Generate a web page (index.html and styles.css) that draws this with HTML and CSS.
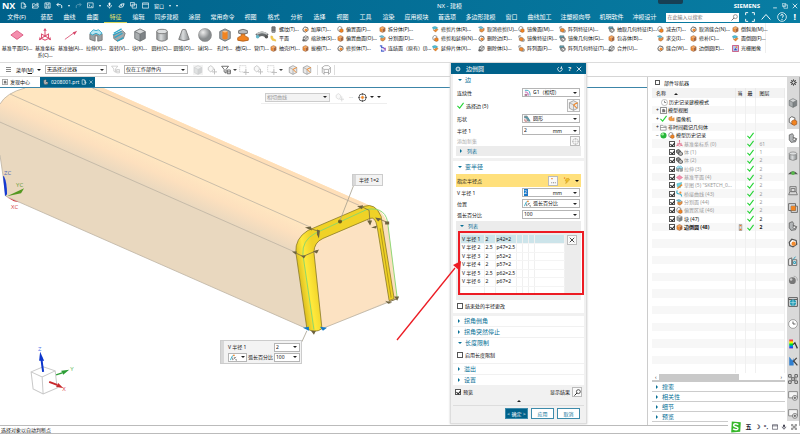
FILE: index.html
```html
<!DOCTYPE html>
<html lang="zh-CN">
<head>
<meta charset="utf-8">
<title>NX - 建模</title>
<link rel="stylesheet" href="styles.css">
</head>
<body>
<svg class="defs" aria-hidden="true">
  <symbol id="cube" viewBox="0 0 16 16"><path fill="#d4d6d7" d="M8 1l6 3-6 3-6-3z"/><path fill="#a9adaf" d="M2 4l6 3v8l-6-3z"/><path fill="#7e8386" d="M14 4L8 7v8l6-3z"/><path fill="none" stroke="#6c7072" d="M8 1l6 3v8l-6 3-6-3V4zM2 4l6 3 6-3M8 7v8"/></symbol>
  <symbol id="ocube" viewBox="0 0 16 16"><path fill="#f6a55a" d="M8 1l6 3-6 3-6-3z"/><path fill="#f28a2e" d="M2 4l6 3v8l-6-3z"/><path fill="#a8643a" d="M14 4L8 7v8l6-3z"/><path fill="none" stroke="#93684a" d="M8 1l6 3v8l-6 3-6-3V4z"/></symbol>
  <symbol id="mixed" viewBox="0 0 16 16"><path fill="#fff" stroke="#666" stroke-width="1.5" d="M2 4l4-3 5 2v7l-4 3-5-3z"/><path fill="#f28420" stroke="#96552a" d="M10 6l4 2v5l-4 2-4-2V8z"/></symbol>
  <symbol id="mixteal" viewBox="0 0 16 16"><path fill="#6dc3d8" stroke="#3a7f92" d="M1 3l6-2 5 3-5 3z"/><path fill="#f0953f" stroke="#8e5a33" d="M4 7l5 1 5-3v5l-5 4-5-2z"/></symbol>
  <symbol id="sheet" viewBox="0 0 16 16"><path fill="#51c0d8" stroke="#3591a6" d="M1 3q6-4 12 1l-4 4Q5 4 3 8z"/><path fill="#f18d30" stroke="#b06a2b" d="M3 9l5 5 6-6-3-2-4 3z"/></symbol>
  <symbol id="ring" viewBox="0 0 16 16"><path fill="#fff" stroke="#555" stroke-width="2" d="M2 7l4-5 7 2 1 6-6 4-5-2z"/><circle cx="9" cy="9" r="3.500" fill="#f28a2e"/></symbol>
  <symbol id="ghost" viewBox="0 0 16 16"><path fill="#eee" stroke="#555" stroke-width="1.500" d="M3 5l5-3 6 2v6l-5 4-6-2zM3 5l6 2 5-3M9 7v7"/><circle cx="4" cy="12" r="3" fill="#666"/></symbol>
  <symbol id="pattern" viewBox="0 0 16 16"><path fill="none" stroke="#555" stroke-width="1.500" d="M2 6V2h5M9 14h5V9"/><path fill="#f28a2e" stroke="#6b5443" d="M3 7l4-2 5 2v5l-4 2-5-2z"/></symbol>
  <symbol id="geo" viewBox="0 0 16 16"><path fill="#67b9cb" stroke="#46606a" stroke-width="1.500" d="M2 2h9v5H2z"/><path fill="#aaa" stroke="#555" stroke-width="1.500" d="M4 7l5-2 5 2v5l-5 3-5-3z"/><path stroke="#fff" stroke-width="2" d="M8 8l4 4"/></symbol>
  <symbol id="thread" viewBox="0 0 16 16"><rect x="4" y="1" width="8" height="14" rx="2" fill="#999" stroke="#555"/><path stroke="#333" d="M4 4h8M4 7h8M4 10h8"/></symbol>
  <symbol id="state" viewBox="0 0 16 16"><path fill="#ddd" stroke="#666" d="M5 1h6v14H5z"/><path fill="#e87a2a" d="M6 2h4v3H6zM6 11h4v3H6z"/></symbol>
  <symbol id="steps" viewBox="0 0 16 16"><path fill="#f6d04d" stroke="#e0a92e" d="M2 2l4 1 1 5 6 3v3l-8-2-3-5z"/></symbol>
  <symbol id="links" viewBox="0 0 16 16"><path fill="none" stroke="#5269d0" stroke-width="3" d="M2 2h4v4h5M6 10v4h6"/><path fill="none" stroke="#9956bd" stroke-width="3" d="M10 8h4v5"/></symbol>
  <symbol id="axes" viewBox="0 0 16 16"><path fill="none" stroke="#dc5274" stroke-width="1.200" d="M8 1v8l-6 4M8 9l6 4M8 9l-4-2v5l4 2 4-2V7z"/><path fill="#dc5274" d="M8 0l2 3H6zM1 14l1-4 2 3zM15 14l-1-4-2 3z"/></symbol>
  <symbol id="plane" viewBox="0 0 16 16"><path fill="#f48fae" stroke="#d9587f" d="M1 8l7-5 7 5-7 5z"/></symbol>
  <symbol id="axis" viewBox="0 0 16 16"><path stroke="#d95375" d="M1 13L12 5"/><path fill="#d64669" d="M15 3l-3 5-2-3z"/></symbol>
  <symbol id="extrude" viewBox="0 0 16 16"><path fill="#9a9fa1" stroke="#777" d="M1 7l4-3 3 2 3-2 4 3v7l-5 1V9H7v6l-6-2z"/><path fill="#b9e6f2" stroke="#2ca6c9" d="M1 6l4-4 3 1 3-1 4 4-3 2-4-2-4 2z"/></symbol>
  <symbol id="revolve" viewBox="0 0 16 16"><path fill="#a3a8aa" stroke="#777" d="M2 8l10-5 3 3-2 6-7 3-4-3z"/><path fill="none" stroke="#2ca6c9" stroke-width="1.500" d="M2 6l9-5M1 8l10-4M3 11l9-5M6 15l7-4"/></symbol>
  <linearGradient id="metal"><stop offset="0" stop-color="#8c9092"/><stop offset=".4" stop-color="#dadcdd"/><stop offset="1" stop-color="#85898b"/></linearGradient>
  <symbol id="cyl" viewBox="0 0 16 16"><path fill="url(#metal)" stroke="#777" d="M2 4v9q6 4 12 0V4z"/><ellipse cx="8" cy="4" rx="6" ry="2.500" fill="#dcdedf" stroke="#777"/></symbol>
  <symbol id="cone" viewBox="0 0 16 16"><path fill="url(#metal)" stroke="#777" d="M6 2L2 13q6 3 12 0L10 2Q8 1 6 2z"/></symbol>
  <radialGradient id="shine" cx=".35" cy=".3"><stop offset="0" stop-color="#eee"/><stop offset="1" stop-color="#888c8e"/></radialGradient>
  <symbol id="ball" viewBox="0 0 16 16"><circle cx="8" cy="8" r="7.500" fill="url(#shine)" stroke="#777" stroke-width=".5"/></symbol>
  <symbol id="hole" viewBox="0 0 16 16"><path fill="#9fa3a5" stroke="#6c7072" d="M8 1l6 3v8l-6 3-6-3V4z"/><path fill="#f28420" d="M5 4q3-2 6 0v8q-3 2-6 0z"/><path fill="#fbc48c" d="M5 4q3-2 6 0-3 2-6 0z"/></symbol>
  <symbol id="groove" viewBox="0 0 16 16"><path fill="#b9bcbe" stroke="#666" d="M3 3q5-3 10 0v3q-5 2-10 0z"/><path fill="#f28420" stroke="#b5621b" d="M6 7h4v2l4 2v3q-6 2-12 0v-3l4-2z"/></symbol>
  <symbol id="tube" viewBox="0 0 16 16"><path fill="none" stroke="#696d6f" stroke-width="5" d="M2 9q6-5 12 0"/><path fill="none" stroke="#bfc2c3" stroke-width="2" d="M2 7q6-4 12 0"/><circle cx="3" cy="10" r="2" fill="#65b7cb"/><circle cx="13" cy="10" r="2" fill="#555"/></symbol>
  <symbol id="filter" viewBox="0 0 16 16"><path fill="#fff" stroke="currentColor" stroke-width="1.200" d="M1 2h11L8 7v6l-3-2V7z"/><path fill="none" stroke="currentColor" stroke-width="1.200" d="M10 8h5v6h-5zM10 11h5"/></symbol>
  <symbol id="snap" viewBox="0 0 16 16"><path fill="#eee" stroke="currentColor" stroke-width="1.200" d="M2 4l4-3 4 3v4L6 11 2 8z"/><path stroke="currentColor" stroke-width="1.500" d="M12 6v9M8 11h8"/></symbol>
  <symbol id="dashbox" viewBox="0 0 16 16"><path fill="none" stroke="currentColor" stroke-dasharray="2 1" d="M1 1h10v10H1z"/><path stroke="currentColor" stroke-width="1.500" d="M11 7v9M7 12h9"/></symbol>
  <symbol id="wire" viewBox="0 0 16 16"><path fill="none" stroke="#888" d="M2 4l4-3h6l3 3-2 3H4zM2 4v8l3 3V8M15 4v8l-3 3V8M5 12h7"/></symbol>
  <symbol id="half" viewBox="0 0 16 16"><path fill="#e8e8e8" stroke="#888" d="M8 1l6 3v8l-6 3-6-3V4z"/><path fill="none" stroke="#999" d="M2 4l6 3v8"/><path stroke="#f28420" stroke-width="1.500" d="M8 7l6-3M8 7l5 5"/></symbol>
  <symbol id="gear" viewBox="0 0 16 16"><circle cx="8" cy="8" r="4" fill="none" stroke="currentColor" stroke-width="2"/><path stroke="currentColor" stroke-width="2" d="M8 1v2M8 13v2M1 8h2M13 8h2M3 3l2 2M11 11l2 2M13 3l-2 2M3 13l2-2"/></symbol>
  <symbol id="page" viewBox="0 0 16 16"><path fill="none" stroke="currentColor" stroke-width="1.500" d="M3 14V2h6l3 3v9zM9 2v4h3M8 10h7"/></symbol>
  <symbol id="open" viewBox="0 0 16 16"><path fill="none" stroke="currentColor" stroke-width="1.500" d="M1 14V4h5l1 2h6v3M1 14l3-5h11l-2 5zM10 3h4v4"/></symbol>
  <symbol id="save" viewBox="0 0 16 16"><path fill="none" stroke="currentColor" stroke-width="1.500" d="M2 2h12v12H2zM5 2v4h6V2M5 14V9h6v5"/></symbol>
  <symbol id="undo" viewBox="0 0 16 16"><path fill="none" stroke="currentColor" stroke-width="2" d="M6 2L2 6l4 4M2 6h8q5 1 3 8"/></symbol>
  <symbol id="screen" viewBox="0 0 16 16"><path fill="none" stroke="currentColor" stroke-width="1.500" d="M1 2h13v11H1zM4 6l3 2-3 2M9 10h3"/></symbol>
  <symbol id="mic" viewBox="0 0 16 16"><rect x="6" y="1" width="4" height="8" rx="2" fill="currentColor"/><path fill="none" stroke="currentColor" stroke-width="1.500" d="M3 7q0 5 5 5t5-5M8 12v3"/></symbol>
  <symbol id="touch" viewBox="0 0 16 16"><path fill="none" stroke="currentColor" stroke-width="2" d="M2 11l5-6 7-1-3 7-6 1zM7 5l1 4"/></symbol>
  <symbol id="windows" viewBox="0 0 16 16"><path fill="none" stroke="currentColor" stroke-width="1.500" d="M1 1h9v8H1zM5 5h10v9H5z"/></symbol>
  <symbol id="win" viewBox="0 0 16 16"><path fill="none" stroke="currentColor" stroke-width="1.500" d="M1 2h14v12H1zM1 5h14"/></symbol>
  <symbol id="search" viewBox="0 0 16 16"><circle cx="10" cy="6" r="4.500" fill="none" stroke="currentColor" stroke-width="1.500"/><path stroke="currentColor" stroke-width="2" d="M7 9l-6 6"/></symbol>
  <symbol id="full" viewBox="0 0 16 16"><path fill="none" stroke="currentColor" stroke-width="1.500" d="M1 5V1h4M11 1h4v4M15 11v4h-4M5 15H1v-4"/></symbol>
  <symbol id="up" viewBox="0 0 16 16"><path fill="none" stroke="currentColor" stroke-width="1.500" d="M1 12l7-8 7 8"/></symbol>
  <symbol id="help" viewBox="0 0 16 16"><circle cx="8" cy="8" r="7" fill="none" stroke="currentColor" stroke-width="1.200"/><path fill="none" stroke="currentColor" stroke-width="1.500" d="M6 6q0-2 2-2t2 2-2 3M8 11v2"/></symbol>
  <symbol id="x" viewBox="0 0 16 16"><path stroke="currentColor" stroke-width="2" d="M2 2l12 12M14 2L2 14"/></symbol>
  <symbol id="min" viewBox="0 0 16 16"><path stroke="currentColor" stroke-width="2" d="M3 13h10"/></symbol>
  <symbol id="reset" viewBox="0 0 16 16"><path fill="none" stroke="currentColor" stroke-width="2" d="M5 3a6 6 0 1 0 7 1M12 1v5h-4"/></symbol>
  <symbol id="tick" viewBox="0 0 16 16"><path fill="none" stroke="#25d435" stroke-width="2.500" d="M1 9l5 5L15 2"/></symbol>
  <symbol id="g1" viewBox="0 0 16 16"><path fill="none" stroke="#34a3be" stroke-width="2" d="M2 3h5q7 0 7 12"/><path fill="none" stroke="#c04dab" stroke-width="2" d="M2 7h3q5 0 5 8"/><path stroke="#666" d="M2 12h5v3H2z" fill="#e65a9b"/></symbol>
  <symbol id="shape" viewBox="0 0 16 16"><path fill="#999" stroke="#4a6c78" d="M1 2h6l7 12H8L5 7H1z"/><path fill="none" stroke="#319ab4" stroke-width="2" d="M3 5q8 0 10 9"/><path fill="none" stroke="#a33" stroke-width="1.500" d="M2 9v5h5"/></symbol>
  <symbol id="percent" viewBox="0 0 16 16"><path fill="none" stroke="#35a9c3" stroke-width="2" d="M1 14Q4 2 9 3"/><circle cx="9" cy="3" r="2" fill="#f28a2e"/><path fill="none" stroke="#555" stroke-width="1.500" d="M6 8v6M8 12l6-5M9 8h2M12 13h3v2"/></symbol>
  <symbol id="part" viewBox="0 0 16 16"><path fill="#b2b5b7" stroke="#444" d="M2 3l5-2 2 3-1 3 6 2-2 5-7 1-3-4z"/><circle cx="10" cy="10" r="2" fill="#fff" stroke="#444"/></symbol>
  <symbol id="clock" viewBox="0 0 16 16"><circle cx="8" cy="8" r="7" fill="#fff" stroke="#777"/><path fill="none" stroke="#555" stroke-width="1.500" d="M8 4v4h4"/></symbol>
  <symbol id="view" viewBox="0 0 16 16"><path fill="#fff" stroke="#555" stroke-width="1.500" d="M1 1h14v14H1z"/><path fill="#777" d="M5 5l4-1 3 3v5H5z"/></symbol>
  <symbol id="camera" viewBox="0 0 16 16"><path fill="#f5a044" stroke="#c06a25" d="M2 6l7-3v6l5-3v7H5l-3-2z"/></symbol>
  <symbol id="folder" viewBox="0 0 16 16"><path fill="#fff" stroke="#777" stroke-width="1.500" d="M1 14V3h5l2 2h6v9zM1 8h13"/></symbol>
  <symbol id="green" viewBox="0 0 16 16"><circle cx="8" cy="8" r="7" fill="#26b53a"/><circle cx="6" cy="5" r="3" fill="#9cec98"/></symbol>
  <symbol id="body" viewBox="0 0 16 16"><path fill="#888" stroke="#333" stroke-width="1.500" d="M1 3l5-2 4 3v5l-5 2-4-3z"/><path fill="#bbb" stroke="#333" stroke-width="1.500" d="M6 8l4-2 5 3v4l-4 2-5-2z"/></symbol>
  <symbol id="sketch" viewBox="0 0 16 16"><path fill="#73d1df" stroke="#30a4b8" d="M2 4l11-3-3 12-7-2z"/><path stroke="#e98932" stroke-width="3" d="M3 15l11-9"/></symbol>
  <symbol id="infer" viewBox="0 0 16 16"><path fill="#ef8422" d="M2 1h3v3H2z"/><path fill="#f5c52c" stroke="#c28b1c" d="M7 4l6-1 2 4-4 1 1 2-6 5 2-6H5z"/></symbol>
  <symbol id="points" viewBox="0 0 16 16"><path fill="#ef8422" d="M3 2h3v3H3z"/><path fill="#777" d="M3 12h2v2H3zM7 12h2v2H7zM11 12h2v2h-2z"/></symbol>
  <symbol id="curve" viewBox="0 0 16 16"><path fill="none" stroke="#38aec7" stroke-width="2.500" d="M3 1q-4 8 6 8 4 1 4 6"/><circle cx="10" cy="6" r="2.500" fill="#ef8f3a"/></symbol>
  <symbol id="globe" viewBox="0 0 16 16"><path fill="#ddd" stroke="#555" stroke-width="1.500" d="M1 1h14v14H1zM1 4h14"/><circle cx="8" cy="9" r="5" fill="#239ab4"/><path stroke="#c3edf1" d="M3 9h10M8 4v10" fill="none"/></symbol>
  <symbol id="hd" viewBox="0 0 16 16"><path fill="none" stroke="#777" stroke-width="1.500" d="M3 9V1h10v8M3 9l-2 5h14l-2-5zM5 4h6v5H5z"/></symbol>
  <symbol id="eye" viewBox="0 0 16 16"><path fill="#555" d="M0 10q8-10 16 0H0z"/><circle cx="8" cy="8" r="3" fill="#56b94a"/></symbol>
  <symbol id="layer" viewBox="0 0 16 16"><path fill="#ddd" stroke="#666" stroke-width="1.500" d="M1 1h11v11H1zM5 5h10v10H5z"/><path fill="#f28420" d="M5 5h7v7H5z"/></symbol>
  <symbol id="lib" viewBox="0 0 16 16"><path fill="#eee" stroke="#666" stroke-width="1.500" d="M1 15V5l5-2v12zM7 15V6h7v9z"/><path fill="none" stroke="#2b9cb8" stroke-width="1.500" d="M8 6l4-5M9 9h3v3H9z"/></symbol>
  <symbol id="radio" viewBox="0 0 16 16"><circle cx="7" cy="9" r="5.500" fill="#777"/><circle cx="5" cy="7" r="2" fill="#ccc"/><path fill="none" stroke="#aaa" stroke-width="1.500" d="M9 2q6 0 6 7"/></symbol>
  <linearGradient id="rainbow" x2="0" y2="1"><stop offset="0" stop-color="#f03"/><stop offset=".3" stop-color="#ff0"/><stop offset=".55" stop-color="#0d3"/><stop offset=".8" stop-color="#07f"/><stop offset="1" stop-color="#51c"/></linearGradient>
  <symbol id="spectrum" viewBox="0 0 16 16"><path fill="url(#rainbow)" d="M2 1h6v14H2z"/><path fill="none" stroke="#333" stroke-width="2" d="M8 9l3-3 4 9"/></symbol>
  <symbol id="tools" viewBox="0 0 16 16"><path fill="#2f7fd0" d="M2 1l5 6 2-4v12H2z"/><path stroke="#444" stroke-width="2" d="M8 9l6-6M9 8l6 7"/></symbol>
  <symbol id="nodes" viewBox="0 0 16 16"><path stroke="#555" d="M4 4l9 9M13 3L4 13M8 8h6"/><path fill="#eee" stroke="#555" stroke-width="1.500" d="M1 1h4v4H1zM11 1h4v4h-4zM1 11h4v4H1zM11 11h4v4h-4zM6 6h4v4H6z"/></symbol>
  <symbol id="addwin" viewBox="0 0 16 16"><path fill="#f4f4f4" stroke="#777" stroke-width="1.300" d="M1 1h14v10H1z"/><circle cx="11" cy="11" r="4" fill="#eee" stroke="#555"/><path stroke="#555" stroke-width="1.500" d="M11 9v4M9 11h4"/></symbol>
  <symbol id="target" viewBox="0 0 16 16"><circle cx="8" cy="8" r="6.500" fill="none" stroke="#444" stroke-width="1.500"/><path stroke="#666" stroke-width="2" d="M8 0v4M8 12v4M0 8h4M12 8h4"/><circle cx="8" cy="8" r="2.500" fill="#f28a2e"/></symbol>
  <symbol id="raster" viewBox="0 0 16 16"><path fill="#b7c7ee" stroke="#c94f78" stroke-width="2" d="M1 1h14v14H1z"/><path fill="#4050b0" d="M4 12l4-5 4 5z"/><circle cx="10" cy="5" r="2" fill="#f08a33"/></symbol>
</svg>

<header class="top">
  <div class="titlebar">
    <strong class="logo">NX</strong>
    <div class="quick">
      <svg><use href="#page"/></svg><svg><use href="#open"/></svg><svg><use href="#save"/></svg><svg><use href="#undo"/></svg><i class="caret"></i><svg class="faint flip"><use href="#undo"/></svg><svg><use href="#screen"/></svg><i class="caret"></i><svg><use href="#mic"/></svg><svg><use href="#touch"/></svg><svg><use href="#windows"/></svg><svg><use href="#win"/></svg><span>窗口</span><i class="caret"></i><i class="caret"></i>
    </div>
    <h1>NX - 建模</h1>
    <span class="notch"></span>
    <div class="corner"><b>SIEMENS</b><button aria-label="最小化"><svg><use href="#min"/></svg></button><button aria-label="还原"><svg><use href="#windows"/></svg></button><button aria-label="关闭"><svg><use href="#x"/></svg></button></div>
  </div>
  <div class="tabbar">
    <nav>
      <a class="file" href="#">文件(F)</a><a href="#">装配</a><a href="#">曲线</a><a href="#">曲面</a><a href="#" class="on">特征</a><a href="#">编辑</a><a href="#" class="w4">同步建模</a><a href="#">涂层</a><a href="#" class="w4">常用命令</a><a href="#">视图</a><a href="#">格式</a><a href="#">分析</a><a href="#">选择</a><a href="#">视图</a><a href="#">工具</a><a href="#">渲染</a><a href="#" class="w4">应用模块</a><a href="#" class="w3">首选项</a><a href="#" class="w5">多边形建模</a><a href="#">窗口</a><a href="#" class="w4">曲线加工</a><a href="#" class="w5">注塑模向导</a><a href="#" class="w4">机明软件</a><a href="#" class="w4">冲模设计</a>
    </nav>
    <div class="find">
      <label class="searchbox"><input type="text" aria-label="搜索" placeholder="在此输入以搜索"><svg><use href="#search"/></svg></label>
      <svg><use href="#full"/></svg><svg><use href="#up"/></svg><svg><use href="#help"/></svg><b>!</b>
    </div>
  </div>
</header>

<section class="ribbon">
  <div class="large">
    <button><svg><use href="#plane"/></svg>基准平面(D)...</button>
    <button><svg><use href="#axes"/></svg>基准坐标<br>系(C)...</button>
    <button><svg><use href="#axis"/></svg>基准轴(A)...</button>
    <button><svg><use href="#extrude"/></svg>拉伸(X)...</button>
    <button><svg><use href="#revolve"/></svg>旋转(V)...</button>
    <button><svg><use href="#cube"/></svg>块(K)...</button>
    <button><svg><use href="#cyl"/></svg>圆柱(C)...</button>
    <button><svg><use href="#cone"/></svg>圆锥(O)...</button>
    <button><svg><use href="#ball"/></svg>球(S)...</button>
    <button><svg><use href="#hole"/></svg>孔(H)...</button>
    <button><svg><use href="#groove"/></svg>槽(G)...</button>
    <button><svg><use href="#tube"/></svg>管(T)...</button>
  </div>
  <div class="small">
    <button><svg><use href="#thread"/></svg>螺纹(T)...</button><button><svg><use href="#steps"/></svg>平面</button><button><svg><use href="#ocube"/></svg>抽壳(H)...</button>
    <button><svg><use href="#ring"/></svg>加厚(T)...</button><button><svg><use href="#ghost"/></svg>缩放体(S)...</button><button><svg><use href="#ocube"/></svg>拔模(T)...</button>
    <button><svg><use href="#mixed"/></svg>偏置面(F)...</button><button><svg><use href="#ocube"/></svg>偏置曲面(O)...</button><button><svg><use href="#ring"/></svg>修剪体(T)...</button>
    <button><svg><use href="#ocube"/></svg>拆分体(P)...</button><button><svg><use href="#mixteal"/></svg>分割面(D)...</button><button><svg><use href="#links"/></svg>连结面（原有）(J)...</button>
    <button><svg><use href="#sheet"/></svg>修剪片体(R)...</button><button><svg><use href="#mixed"/></svg>修剪和延伸(N)...</button><button><svg><use href="#sheet"/></svg>延伸片体(X)...</button>
    <button><svg><use href="#mixteal"/></svg>取消修剪(U)...</button><button><svg><use href="#ring"/></svg>删除边(E)...</button><button><svg><use href="#ghost"/></svg>删除体(L)...</button>
    <button><svg><use href="#mixed"/></svg>镜像面(M)...</button><button><svg><use href="#pattern"/></svg>镜像特征(R)...</button><button><svg><use href="#pattern"/></svg>阵列面(F)...</button>
    <button><svg><use href="#pattern"/></svg>阵列特征(A)...</button><button><svg><use href="#geo"/></svg>镜像几何体(G)...</button><button><svg><use href="#geo"/></svg>阵列几何特征(T)...</button>
    <button><svg><use href="#geo"/></svg>抽取几何特征(E)...</button><button><svg><use href="#ocube"/></svg>包容体(B)...</button><button><svg><use href="#ghost"/></svg>合并(U)...</button>
    <button><svg><use href="#mixed"/></svg>减去(T)...</button><button><svg><use href="#mixteal"/></svg>求交(I)...</button><button><svg><use href="#ring"/></svg>缝合(W)...</button>
    <button><svg><use href="#ring"/></svg>取消缝合(N)...</button><button><svg><use href="#ocube"/></svg>修补(C)...</button><button><svg><use href="#ocube"/></svg>边倒圆(E)...</button>
    <button><svg><use href="#ocube"/></svg>倒斜角(M)...</button><button><svg><use href="#sheet"/></svg>面倒圆(F)...</button><button><svg><use href="#raster"/></svg>光栅图像</button>
  </div>
</section>

<div class="toolbar">
  <button class="menu"><i class="burger"></i><span>菜单(<u>M</u>)</span><i class="caret"></i></button>
  <span class="sel s1"><select aria-label="选择过滤器"><option>无选择过滤器</option></select></span>
  <svg class="faint"><use href="#filter"/></svg>
  <span class="sel s2"><select aria-label="选择范围"><option>仅在工作部件内</option></select></span>
  <div class="icons">
    <svg class="boxed faint"><use href="#cube"/></svg><svg class="faint"><use href="#snap"/></svg><svg><use href="#filter"/></svg><i class="caret"></i><svg class="faint"><use href="#dashbox"/></svg><svg class="faint"><use href="#snap"/></svg><svg class="faint"><use href="#dashbox"/></svg>
  </div>
  <i class="caret"></i>
  <div class="icons two"><svg><use href="#half"/></svg><svg><use href="#half"/></svg></div>
  <span class="ends"><svg><use href="#wire"/></svg></span>
</div>

<main>
  <section class="work">
    <div class="docs"><a href="#"><svg><use href="#view"/></svg>发现中心</a><a href="#" class="on"><svg><use href="#part"/></svg><span>0208001.prt</span><svg><use href="#page"/></svg><svg><use href="#x"/></svg></a></div>
    <div class="canvas">
      <svg class="scene" viewBox="0 88 648 336" preserveAspectRatio="xMinYMin slice" role="img" aria-label="模型">
        <defs><linearGradient id="shade" gradientUnits="userSpaceOnUse" x1="0" y1="90" x2="-12" y2="117"><stop offset="0" stop-color="#ffe6c0"/><stop offset=".4" stop-color="#fde0be"/><stop offset="1" stop-color="#e9d8bf"/></linearGradient>
        <linearGradient id="gold" gradientUnits="userSpaceOnUse" x1="299" y1="290" x2="318" y2="287"><stop offset="0" stop-color="#d9b91a"/><stop offset=".5" stop-color="#ffe93c"/><stop offset="1" stop-color="#f0d227"/></linearGradient></defs>
        <path fill="url(#shade)" d="M0 88H103L368 205Q382 208 387 225L396 298L321 328H306L6 196L0 155z"/>
        <path fill="#ffdfb8" d="M92 88H103L368 205L358 206z"/>
        <path fill="#fff" d="M0 88H25Q6 93 0 104z"/>
        <path fill="#fce2c2" d="M313 246L372 217L388 300L321 328z"/>
        <path fill="#fadfbd" d="M381 214L387 225L396 298L390 300z"/>
        <g fill="none" stroke="#bdb3a3" stroke-width=".8"><path d="M25 88Q6 93 0 104M10 94L310 227M0 122L295 252M92 88L358 205M0 155L6 196L306 328M321 328L396 298"/></g>
        <path fill="url(#gold)" fill-rule="evenodd" stroke="#8b7a27" stroke-width=".8" d="M306 328L295 252Q294 238 307 230L363 206Q374 202 380 216L382 230L393 298L388 300L376 226Q374 216 369 218L322 238Q313 242 313 252L321 328Q314 333 306 328z"/>
        <path fill="none" stroke="#b39a1c" d="M379 228L390 297"/>
        <path fill="none" stroke="#84d66f" stroke-width=".9" d="M313 329L302 254Q301 240 314 233L366 209Q386 206 387 226L396 297"/>
        <path fill="none" stroke="#7a6c42" stroke-width=".8" d="M294 252L302 256L316 250M360 206L368 210L369 224M377 218L386 222M306 227L318 231M386 302L396 298"/>
        <path fill="#6d6340" d="M291 251h5l-1 3zM300 255h5l-2 3zM312 251l6-2-2 4zM356 206l6-1-1 4zM366 220h5l-2 5zM374 217l6 1-3 3zM384 221h4v3h-4zM370 227l6-2-1 3zM304 227l6-1 1 4zM316 229l3 1-1 8-2-4zM384 300l7 2-4 1zM393 296h5l-2 4zM310 330h5l-2 4z"/>
        <circle cx="339" cy="221" r="2" fill="#6d5b19"/><path stroke="#a59f8d" stroke-width=".8" d="M339 220L353 184M301 341L306 330"/>
        <path fill="#1479c7" d="M302 327l6-1v4zM319 326l7 1-4 3z"/>
        <path fill="#1439d2" d="M3 176l2 20 2-2q0-12-3-18z"/><path fill="#549821" d="M7 196l17-8-3 5z"/><path fill="#cb252c" d="M7 197l12 5-5-1z"/>
        <g class="axislabel"><text x="4" y="175" fill="#5068b4">ZC</text><text x="16" y="187" fill="#6b9c3b">YC</text><text x="11" y="209" fill="#d84547">XC</text>
        <text x="38" y="350" fill="#4f77eb">Z</text><text x="70" y="370" fill="#58b858">Y</text><text x="62" y="390" fill="#d9434a">X</text></g>
        <g fill="none" stroke="#c9c9c9"><path d="M31 371l12-5 12 4 2 17-14 6-10-5zM31 371l11 5 13-6M42 376l1 17"/></g>
        <path stroke="#0c35cc" stroke-width="2" d="M43 371l-2-15"/><path fill="#0c35cc" d="M40 351l4 9h-5z"/><path stroke="#2c9e35" stroke-width="1.500" d="M56 374l6-2"/><path fill="#2c9e35" d="M69 369l-8 1 2 4z"/><path stroke="#c7272b" stroke-width="2" d="M49 381l8 3"/><path fill="#c7272b" d="M63 387l-7-1 2-4z"/>
      </svg>
      <div class="minibar"><span class="sel"><select aria-label="曲线规则"><option>相切曲线</option></select></span><svg class="faint"><use href="#snap"/></svg><em>···</em><svg><use href="#target"/></svg><i class="caret"></i><i class="caret last"></i></div>
      <div class="callout tag"><i class="grip"></i>半径 1=2</div>
      <div class="callout form"><i class="grip"></i>
        <div><label for="cr">V 半径 1</label><span class="sel"><input id="cr" type="text" value="2"></span><span class="sel pct"><svg><use href="#percent"/></svg></span><label for="cp">弧长百分比</label><span class="sel"><input id="cp" type="text" value="100"></span></div></div>
    </div>
  </section>

  <aside class="nav">
    <h2><i class="square"></i>部件导航器</h2>
    <div class="treewrap"><table class="tree">
      <thead><tr><th>名称<i class="sort"></i></th><th>当</th><th>最</th><th>图层</th></tr></thead>
      <tbody>
        <tr><td><div class="n l1"><svg><use href="#clock"/></svg>历史记录建模模式</div></td><td></td><td></td><td></td></tr>
        <tr><td><div class="n"><i>+</i><svg><use href="#view"/></svg>模型视图</div></td><td></td><td></td><td></td></tr>
        <tr><td><div class="n"><i>+</i><svg><use href="#tick"/></svg><svg><use href="#camera"/></svg>摄像机</div></td><td></td><td></td><td></td></tr>
        <tr><td><div class="n"><i>+</i><svg><use href="#folder"/></svg>非时间戳记几何体</div></td><td></td><td></td><td></td></tr>
        <tr><td><div class="n"><i>−</i><svg><use href="#green"/></svg><svg><use href="#mixed"/></svg>模型历史记录</div></td><td></td><td><svg><use href="#tick"/></svg></td><td></td></tr>
        <tr class="dim"><td><label class="n l2"><input type="checkbox" checked><svg><use href="#axes"/></svg>基准坐标系 (0)</label></td><td></td><td><svg><use href="#tick"/></svg></td><td>61</td></tr>
        <tr class="dim"><td><label class="n l2"><input type="checkbox" checked><svg><use href="#body"/></svg>体 (1)</label></td><td></td><td><svg><use href="#tick"/></svg></td><td>1</td></tr>
        <tr class="dim"><td><label class="n l2"><input type="checkbox" checked><svg><use href="#body"/></svg>体 (2)</label></td><td></td><td><svg><use href="#tick"/></svg></td><td>2</td></tr>
        <tr class="dim"><td><label class="n l2"><input type="checkbox" checked><svg><use href="#extrude"/></svg>拉伸 (3)</label></td><td></td><td><svg><use href="#tick"/></svg></td><td>2</td></tr>
        <tr class="dim"><td><label class="n l2"><input type="checkbox" checked><svg><use href="#plane"/></svg>基准平面 (4)</label></td><td></td><td><svg><use href="#tick"/></svg></td><td>2</td></tr>
        <tr class="dim"><td><label class="n l2"><input type="checkbox" checked><svg><use href="#sketch"/></svg>草图 (5) "SKETCH_0...</label></td><td></td><td><svg><use href="#tick"/></svg></td><td>2</td></tr>
        <tr class="dim"><td><label class="n l2"><input type="checkbox" checked><svg><use href="#curve"/></svg>桥接曲线 (43)</label></td><td></td><td><svg><use href="#tick"/></svg></td><td>2</td></tr>
        <tr class="dim"><td><label class="n l2"><input type="checkbox" checked><svg><use href="#mixteal"/></svg>分割面 (44)</label></td><td></td><td><svg><use href="#tick"/></svg></td><td>2</td></tr>
        <tr class="dim"><td><label class="n l2"><input type="checkbox" checked><svg><use href="#mixed"/></svg>偏置区域 (46)</label></td><td></td><td><svg><use href="#tick"/></svg></td><td>2</td></tr>
        <tr><td><label class="n l2"><input type="checkbox" checked><svg><use href="#cube"/></svg>块 (47)</label></td><td></td><td><svg><use href="#tick"/></svg></td><td>2</td></tr>
        <tr class="cur"><td><label class="n l2"><input type="checkbox" checked><svg><use href="#ocube"/></svg>边倒圆 (48)</label></td><td><svg><use href="#state"/></svg></td><td><svg><use href="#tick"/></svg></td><td>2</td></tr>
        <tr><td></td><td></td><td></td><td></td></tr><tr><td></td><td></td><td></td><td></td></tr><tr><td></td><td></td><td></td><td></td></tr><tr><td></td><td></td><td></td><td></td></tr><tr><td></td><td></td><td></td><td></td></tr><tr><td></td><td></td><td></td><td></td></tr><tr><td></td><td></td><td></td><td></td></tr><tr><td></td><td></td><td></td><td></td></tr><tr><td></td><td></td><td></td><td></td></tr><tr><td></td><td></td><td></td><td></td></tr><tr><td></td><td></td><td></td><td></td></tr><tr><td></td><td></td><td></td><td></td></tr><tr><td></td><td></td><td></td><td></td></tr><tr><td></td><td></td><td></td><td></td></tr><tr><td></td><td></td><td></td><td></td></tr><tr><td></td><td></td><td></td><td></td></tr><tr><td></td><td></td><td></td><td></td></tr>
      </tbody>
    </table></div>
    <div class="scroll"><span>‹</span><i></i><span>›</span></div>
    <ul><li>搜索</li><li>相关性</li><li>细节</li><li>预览</li></ul>
  </aside>
  <nav class="side">
    <svg class="g"><use href="#gear"/></svg>
    <a href="#"><svg><use href="#cube"/></svg></a><a href="#"><svg><use href="#mixed"/></svg></a><a href="#" class="on"><svg><use href="#part"/></svg></a><a href="#"><svg><use href="#cyl"/></svg></a><a href="#"><svg><use href="#eye"/></svg></a><a href="#"><svg><use href="#hd"/></svg></a><a href="#"><svg><use href="#layer"/></svg></a><a href="#"><svg><use href="#part"/></svg></a><a href="#"><svg><use href="#ring"/></svg></a><a href="#"><svg><use href="#lib"/></svg></a><a href="#" class="tall"><svg><use href="#radio"/></svg></a><a href="#" class="tall"><svg><use href="#globe"/></svg></a><a href="#" class="tall"><svg><use href="#clock"/></svg></a><a href="#"><svg><use href="#spectrum"/></svg></a><a href="#"><svg><use href="#tools"/></svg></a><a href="#"><svg><use href="#nodes"/></svg></a><a href="#"><svg><use href="#addwin"/></svg></a><a href="#"><svg><use href="#addwin"/></svg></a>
  </nav>
</main>
<footer>选择对象以自动判断点</footer>

<form class="dialog">
  <header><svg><use href="#gear"/></svg><b>边倒圆</b><svg><use href="#reset"/></svg><b class="q">?</b><svg><use href="#x"/></svg></header>
  <fieldset>
    <h3 class="open">边</h3>
    <div class="row"><label for="cont">连续性</label><span class="sel"><svg><use href="#g1"/></svg><select id="cont"><option>G1（相切）</option></select></span></div>
    <div class="row"><span class="pick"><svg><use href="#tick"/></svg>选择边 (5)</span><button type="button" class="sq big" aria-label="选择边"><svg><use href="#half"/></svg></button></div>
    <div class="row"><label for="shape-type">形状</label><span class="sel"><svg><use href="#shape"/></svg><select id="shape-type"><option>圆形</option></select></span></div>
    <div class="row s"><label for="rad">半径 1</label><span class="sel"><input id="rad" type="text" value="2"><em>mm</em></span></div>
    <div class="row xs off"><span>添加新集</span><button type="button" class="sq" aria-label="添加新集" disabled><svg><use href="#target"/></svg></button></div>
    <div class="list"><h4>列表</h4></div>
  </fieldset>
  <fieldset>
    <h3 class="open">变半径</h3>
    <div class="row hot"><b>指定半径点</b><span><button type="button" class="sq" aria-label="点对话框"><svg><use href="#points"/></svg></button><svg><use href="#infer"/></svg><i class="caret"></i></span></div>
    <div class="row s"><label for="vr">V 半径 1</label><span class="sel"><input id="vr" class="marked" type="text" value="2"><em>mm</em></span></div>
    <div class="row s"><label for="loc">位置</label><span class="sel"><svg><use href="#percent"/></svg><select id="loc"><option>弧长百分比</option></select></span></div>
    <div class="row s"><label for="arc">弧长百分比</label><span class="sel"><input id="arc" type="text" value="100"></span></div>
    <div class="list full"><h4 class="open">列表</h4>
      <div class="pair">
        <table>
          <tr class="on"><td>V 半径 1</td><td>2</td><td>p42=2</td><td></td><td></td><td></td><td></td></tr>
          <tr><td>V 半径 2</td><td>2.5</td><td>p47=2.5</td><td></td><td></td><td></td><td></td></tr>
          <tr><td>V 半径 3</td><td>2</td><td>p52=2</td><td></td><td></td><td></td><td></td></tr>
          <tr><td>V 半径 4</td><td>2</td><td>p57=2</td><td></td><td></td><td></td><td></td></tr>
          <tr><td>V 半径 5</td><td>2.5</td><td>p62=2.5</td><td></td><td></td><td></td><td></td></tr>
          <tr><td>V 半径 6</td><td>2</td><td>p67=2</td><td></td><td></td><td></td><td></td></tr>
          <tr><td></td><td></td><td></td><td></td><td></td><td></td><td></td></tr>
        </table>
        <button type="button" class="sq" aria-label="移除"><svg><use href="#x"/></svg></button>
        <svg class="mark" viewBox="0 0 190 112"><path fill="none" stroke="#ec1c24" stroke-width="2" d="M63 2h124v62H63z"/><path stroke="#ec1c24" stroke-width="1.300" d="M1 110L59 38"/><path fill="#ec1c24" d="M65 31l-1 10-7-6z"/></svg>
      </div>
    </div>
    <label class="row s check"><input type="checkbox">结束处的半径更改</label>
  </fieldset>
  <fieldset class="fold"><h3>拐角倒角</h3></fieldset>
  <fieldset class="fold"><h3>拐角突然停止</h3></fieldset>
  <fieldset class="fold wide"><h3 class="open">长度限制</h3><label class="row check"><input type="checkbox">启用长度限制</label></fieldset>
  <fieldset class="fold"><h3>溢出</h3></fieldset>
  <fieldset class="fold"><h3>设置</h3></fieldset>
  <div class="foot"><label><input type="checkbox" checked>预览</label><span>显示结果<button type="button" class="sq" aria-label="显示结果"><svg><use href="#search"/></svg></button></span></div>
  <i class="sort"></i>
  <div class="actions"><button type="button" class="ok">&lt; 确定 &gt;</button><button type="button">应用</button><button type="button">取消</button></div>
</form>
<div class="ime"><svg class="s" viewBox="0 0 20 20"><path fill="#35b729" d="M3 1l15 1-1 16-15 1z"/><path fill="none" stroke="#fff" stroke-width="2.500" d="M14 6q-7-3-8 1 0 2 4 3t3 3q-2 3-8 0"/></svg><b>五</b><b>☽</b><b>°,</b><svg><use href="#win"/></svg><svg><use href="#mic"/></svg><svg><use href="#nodes"/></svg></div>
</body>
</html>
```
FILE: styles.css
```css
* { box-sizing: border-box; }
body { margin: 0; height: 100vh; display: flex; flex-direction: column; position: relative; overflow: hidden; background: #fff; color: #111; font: 5px/8px "Noto Sans", "Noto Sans CJK SC", sans-serif; }
.defs { position: absolute; width: 0; height: 0; }
svg { width: 7px; height: 7px; flex: none; display: block; }
button, input, select { font: inherit; color: inherit; margin: 0; padding: 0; border: 0; background: none; border-radius: 0; }
h1, h2, h3, h4, ul, fieldset { margin: 0; padding: 0; border: 0; font: inherit; list-style: none; min-width: 0; }
a { color: inherit; text-decoration: none; }
em { font-style: normal; }
.faint { opacity: .35; }
.flip { transform: scaleX(-1); }
.caret { border: 2px solid transparent; border-top-color: currentColor; border-bottom: 0; width: 0; height: 0; flex: none; }
.sort { border: 2px solid transparent; border-bottom-color: #222; border-top: 0; width: 0; height: 0; }

.top { background: linear-gradient(100deg, #00618a, #087da3); color: #fff; flex: none; }
.titlebar { display: flex; height: 11px; align-items: center; position: relative; }
.logo { font: bold 9px/11px "Open Sans", sans-serif; margin-left: 2px; width: 18px; }
.quick { display: flex; align-items: center; gap: 5px; }
.quick .caret { border-width: 1px; border-top-width: 2px; }
h1 { position: absolute; left: 0; right: 0; text-align: center; padding-left: 99px; font-size: 6px; }
.notch { position: absolute; right: 117px; top: 0; width: 25px; height: 4px; background: #173f54; border-radius: 0 0 2px 2px; }
.corner { margin-left: auto; margin-right: 2px; display: flex; gap: 4px; align-items: center; }
.corner b { font-size: 6px; margin-right: 8px; }
.corner svg { width: 6px; height: 6px; }
.tabbar { height: 12px; display: flex; justify-content: space-between; font-size: 6px; line-height: 12px; }
.tabbar nav { display: flex; white-space: nowrap; }
.tabbar a { width: 23px; display: flex; justify-content: center; }
.tabbar .file { width: 35px; padding-right: 2px; }
.tabbar .w3 { width: 28px; }
.tabbar .w4 { width: 33px; }
.tabbar .w5 { width: 39px; }
.tabbar .on { color: #e8e06a; border-bottom: 1px solid #d7d45a; }
.find { display: flex; align-items: center; gap: 6px; padding-right: 4px; }
.find > svg { width: 10px; height: 10px; }
.find b { font-size: 9px; }
.searchbox { width: 73px; height: 9px; background: #fff; display: flex; align-items: center; color: #666; font-size: 5px; padding: 0 1px; }
.searchbox input { flex: 1; min-width: 0; width: 0; }

.ribbon { height: 40px; flex: none; display: flex; border-bottom: 1px solid #dcdcdc; line-height: 7px; }
.large { display: grid; grid-template-columns: 30px 26px 25px 26px 20px 21px 23px 22px 20px 19px 18px 19px; width: 270px; flex: none; padding: 5px 0 0 2px; }
.large button { display: flex; flex-direction: column; align-items: center; white-space: nowrap; justify-self: center; width: 0; }
.large svg { width: 14px; height: 14px; margin-bottom: 3px; }
.small { display: grid; grid-auto-flow: column; grid-template-rows: 10px 9px 10px; grid-template-columns: 32px 35px 42px 53px 46px 40px 41px 49px 49px 33px 42px 32px; padding-top: 1px; height: 30px; border-right: 1px solid #eee; align-items: center; padding-right: 1px; }
.small button { display: flex; align-items: center; gap: 2px; white-space: nowrap; width: 0; }

.toolbar { height: 14px; flex: none; display: flex; align-items: center; border-bottom: 1px solid #d5d5d5; color: #444; }
.menu { display: flex; align-items: center; gap: 3px; width: 39px; margin-left: 6px; color: #111; white-space: nowrap; }
.menu .burger { margin-right: 2px; }
.burger { width: 5px; height: 5px; border: solid #888; border-width: 1px 0; flex: none; background: linear-gradient(#888, #888) center / 100% 1px no-repeat; }
.sel { display: flex; align-items: center; border: 1px solid #b5b5b5; background: #fff; color: #111; height: 9px; padding: 0 2px 0 1px; gap: 2px; }
.sel::after { content: ""; border: 2px solid transparent; border-top-color: #222; border-bottom: 0; flex: none; }
.sel select, .sel input { appearance: none; flex: 1; min-width: 0; width: 0; height: 7px; line-height: 7px; }
.s1 { width: 62px; }
.s2 { width: 64px; }
.toolbar .s1 + svg { width: 9px; height: 9px; margin: 0 4px; }
.icons { display: flex; gap: 4px; margin: 0 2px 0 5px; align-items: center; }
.icons svg { width: 10px; height: 10px; }
.icons .caret { margin: 0 -2px; }
.icons .boxed { background: #ddd; }
.ends { border: solid #ddd; border-width: 0 1px; padding: 0 3px; margin-left: 3px; }
.ends svg { width: 10px; height: 10px; }

main { flex: 1; min-height: 0; display: flex; border-right: 1px solid #aaa; }
.work { flex: 1; min-width: 0; display: flex; flex-direction: column; border-right: 1px solid #ccc; }
.docs { height: 11px; flex: none; display: flex; border-bottom: 1px solid #3c85a8; }
.docs a { width: 40px; display: flex; align-items: center; padding-left: 2px; gap: 2px; white-space: nowrap; }
.docs .on { width: 55px; background: #00628a; color: #fff; padding: 0 3px; justify-content: space-between; font-size: 5px; }
.docs svg { width: 6px; height: 6px; }
.docs .on svg + svg { width: 4px; }
.canvas { flex: 1; position: relative; overflow: hidden; min-height: 0; }
.scene { position: absolute; inset: 0; width: 100%; height: 100%; }
.axislabel { font: 6px "Open Sans", sans-serif; }
.minibar { position: absolute; left: 261px; top: 3px; width: 126px; height: 13px; display: flex; align-items: center; gap: 5px; padding-left: 4px; border-bottom: 1px solid #eee; color: #888; }
.minibar .sel { width: 65px; background: #f3f3f3; border-color: #ccc; color: #999; }
.minibar svg { width: 9px; height: 9px; }
.minibar > .caret { color: #222; margin-left: -2px; }
.callout { position: absolute; background: #f3f3f3; border: 1px solid #ccc; display: flex; }
.grip { width: 3px; background: #d8d8d8; }
.tag { left: 352px; top: 86px; width: 31px; height: 12px; gap: 3px; align-items: center; white-space: nowrap; }
.tag .grip { height: 100%; }
.form { left: 220px; top: 252px; width: 82px; height: 24px; gap: 4px; }
.form > div { display: grid; grid-template-columns: 19px 25px 26px; gap: 1px 1px; align-content: center; white-space: nowrap; }
.form label:first-child { grid-column: span 2; }
.form .sel { width: auto; }
.form .pct { gap: 4px; }

.nav { width: 139px; flex: none; display: flex; flex-direction: column; padding: 0 2px 3px 4px; background: #fff; }
.nav h2 { display: flex; align-items: center; height: 11px; gap: 4px; padding-left: 3px; }
.square { width: 5px; height: 5px; border: 1px solid #555; }
.treewrap { flex: 1; min-height: 0; overflow: hidden; }
.tree { border-collapse: collapse; table-layout: fixed; width: 100%; }
.tree th { font-weight: normal; text-align: left; height: 10px; padding: 0 0 0 2px; background: #f3f3f3; width: 10px; border-right: 1px solid #eaeaea; }
.tree th:first-child { width: 83px; padding-left: 4px; }
.tree th:last-child { width: auto; padding-left: 4px; }
.tree th .sort { display: inline-block; margin-left: 8px; }
.tree td { height: 8px; padding: 0 0 0 1px; border-right: 1px solid #f0f0f0; white-space: nowrap; overflow: hidden; }
.tree tr:nth-child(3n) td { height: 9px; }
.tree td:last-child { padding-left: 4px; }
.tree tbody tr:nth-child(even) { background: #f7f7f7; }
.n { display: flex; align-items: center; gap: 1px; height: 8px; padding-left: 3px; }
.n i { font-style: normal; width: 3px; }
.l1 { padding-left: 8px; }
.l2 { padding-left: 16px; }
.dim { color: #999; }
.cur { font-weight: bold; }
input[type=checkbox] { appearance: none; width: 6px; height: 6px; border: 1px solid #555; background: #fff; flex: none; position: relative; }
input[type=checkbox]:checked::after { content: ""; position: absolute; left: 1px; top: 0; width: 2px; height: 3px; border: solid #222; border-width: 0 1px 1px 0; transform: rotate(40deg); }
.scroll { height: 9px; flex: none; display: flex; align-items: center; padding: 0 3px; gap: 2px; border-bottom: 2px solid #c9c9c9; }
.scroll i { width: 80px; height: 6px; background: #c9c9c9; margin-right: auto; }
.nav li { height: 10px; display: flex; align-items: center; gap: 4px; padding-left: 4px; color: #087096; border-bottom: 1px solid #ccc; font-size: 6px; }
.nav li::before, h3::before, h4::before { content: ""; border: 2px solid transparent; border-left-color: #087096; border-right: 0; flex: none; }
.side { width: 12px; flex: none; background: #d9d9d9; display: flex; flex-direction: column; align-items: center; }
.side .g { margin: 2px 0 8px; flex: none; }
.side a { height: 17px; width: 100%; display: grid; place-items: center; flex: none; }
.side a:nth-child(even) { height: 18px; }
.side a.tall:nth-child(n) { height: 22px; }
.side a svg { width: 10px; height: 10px; }
.side .on { background: #fff; }
footer { height: 9px; flex: none; border: solid #bbb; border-width: 1px 0; padding-left: 1px; line-height: 8px; font-size: 5px; }

.dialog { position: absolute; right: 213px; top: 63px; width: 137px; background: #f1f1f1; border: solid #ddd; border-width: 0 1px 1px; padding: 0 2px 3px; box-shadow: 0 0 2px #ccc; }
.dialog > header { height: 11px; margin: 0 -2px; background: #00618a; color: #fff; display: flex; align-items: center; gap: 5px; padding: 0 4px; font-size: 6px; }
.dialog > header b:first-of-type { margin-right: auto; font-weight: normal; }
.dialog > header svg { width: 6px; height: 6px; }
.dialog fieldset { background: #fff; padding: 0 3px 2px; margin-bottom: 3px; }
.dialog .fold { padding-bottom: 0; margin-bottom: 1px; }
.dialog .wide { padding-bottom: 2px; }
.dialog .fold h3 { height: 10px; }
h3, h4 { display: flex; align-items: center; color: #087096; gap: 4px; }
h3 { font-size: 6px; height: 12px; padding-left: 2px; }
h4 { height: 10px; padding-left: 4px; gap: 5px; }
h3.open::before, h4.open::before { border: 2px solid transparent; border-top-color: #087096; border-bottom: 0; margin-right: -1px; }
.row { height: 13px; display: flex; align-items: center; justify-content: space-between; padding: 0 1px; white-space: nowrap; }
.row.s { height: 11px; }
.row.xs { height: 10px; }
.row .sel { width: 58px; }
.row em { margin-right: 9px; }
.pick { display: flex; gap: 2px; align-items: center; }
.off { color: #aaa; }
.off svg { filter: grayscale(1); opacity: .4; }
.sq { width: 10px; height: 10px; border: 1px solid #bbb; background: #fafafa; display: grid; place-items: center; line-height: 8px; }
.sq.big { width: 13px; height: 13px; }
.big svg { width: 11px; height: 11px; }
.list { background: #ececec; }
.hot { background: #ffe07c; margin-top: 1px; }
.hot b { font-weight: normal; }
.hot span { display: flex; align-items: center; gap: 5px; padding-right: 1px; }
input.marked { flex: none; width: 4px; background: #1a78c8; color: #fff; margin-right: auto; }
.full { height: 79px; margin-top: 1px; }
.pair { display: flex; gap: 2px; padding: 4px 3px 0 5px; position: relative; align-items: flex-start; }
.pair table { border-collapse: collapse; table-layout: fixed; width: 104px; background: #fff; height: 60px; }
.pair td { padding: 0 0 0 1px; height: 8px; border-right: 1px solid #f0f0f0; border-bottom: 1px solid #f4f4f4; white-space: nowrap; line-height: 7px; }
.pair td:nth-child(1) { width: 23px; }
.pair td:nth-child(2) { width: 11px; }
.pair td:nth-child(3) { width: 21px; }
.pair td:nth-child(4), .pair td:nth-child(5), .pair td:nth-child(6) { width: 6px; }
.pair .on td { background: #cce4ea; }
.pair .sq svg { width: 6px; height: 6px; }
.mark { position: absolute; left: -60px; top: -1px; width: 190px; height: 112px; z-index: 2; pointer-events: none; }
.check { justify-content: flex-start; gap: 2px; }
.foot { display: flex; justify-content: space-between; align-items: center; height: 12px; padding: 0 2px; }
.foot label, .foot span { display: flex; align-items: center; gap: 2px; }
.dialog > .sort { display: block; margin: 2px auto 3px; }
.actions { display: flex; justify-content: flex-end; gap: 3px; padding: 2px 4px 1px; border-top: 1px solid #ddd; }
.actions button { width: 23px; height: 11px; border: 1px solid #3d8bab; color: #087096; background: #fff; line-height: 8px; white-space: nowrap; }
.actions .ok { background: #00618a; color: #fff; }
.ime { position: absolute; right: 1px; bottom: 1px; width: 71px; height: 12px; background: #fff; display: flex; align-items: center; justify-content: space-between; padding: 0 2px; color: #223; }
.ime svg { width: 6px; height: 6px; }
.ime .s { width: 12px; height: 12px; }
.ime b { font-size: 6px; }
```
